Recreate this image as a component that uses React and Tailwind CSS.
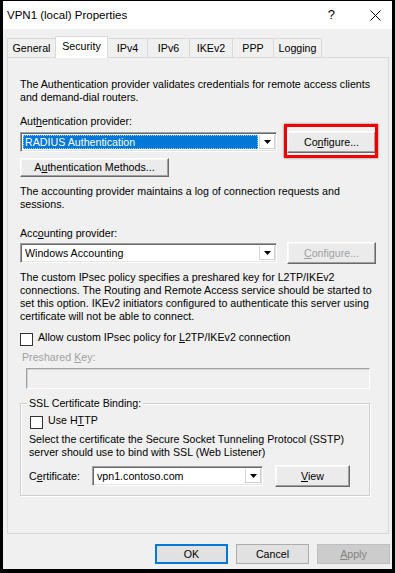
import React from "react";

/* ================= SMALL WIN32 PIECES ================= */
function Btn({ children, className = "", disabled }) {
    return (
        <div
            className={`flex items-center justify-center bg-[#ebebeb] border border-t-white border-l-white border-b-[#696969] border-r-[#696969] shadow-[inset_-1px_-1px_0_#a0a0a0,inset_1px_1px_0_#f8f8f8] ${disabled ? "text-[#a0a0a0]" : "text-black"} ${className}`}
        >
            <span>{children}</span>
        </div>
    );
}

function Arrow() {
    return (
        <svg width="7" height="4" viewBox="0 0 7 4">
            <path d="M0 0h7L3.5 4z" fill="#000" />
        </svg>
    );
}

function Combo({ children, className = "", selected }) {
    return (
        <div
            className={`flex bg-white border border-t-[#a0a0a0] border-l-[#a0a0a0] border-b-white border-r-white shadow-[inset_1px_1px_0_#696969,inset_-1px_-1px_0_#e3e3e3] pt-[2px] pb-[2px] pl-[2px] pr-[1px] ${className}`}
        >
            {selected ? (
                <div className="flex-1 flex items-center bg-[#0078d7] text-white pl-[1px] border border-dotted border-[#9cc8ef] whitespace-nowrap">
                    {children}
                </div>
            ) : (
                <div className="flex-1 flex items-center pl-[2px] whitespace-nowrap">{children}</div>
            )}
            <div className="w-[16px] ml-[1px] flex items-center justify-center bg-white border-l border-[#d6d6d6] shadow-[inset_-1px_-1px_0_#cfcfcf]">
                <Arrow />
            </div>
        </div>
    );
}

function Check() {
    return <div className="w-[13px] h-[13px] bg-white border border-[#333333] shrink-0" />;
}

const tabs = [
    { label: "General", w: "w-[49px]" },
    { label: "Security", w: "w-[53px]", active: true },
    { label: "IPv4", w: "w-[41px]" },
    { label: "IPv6", w: "w-[43px]" },
    { label: "IKEv2", w: "w-[44px]" },
    { label: "PPP", w: "w-[42px]" },
    { label: "Logging", w: "w-[49px]" },
];

export default function App() {
    return (
        <div className="w-[395px] h-[573px] bg-black pt-[1px] px-[3px] pb-[4px] font-['Liberation_Sans',Arial,sans-serif] text-[10.67px] leading-[13px] text-black">
            <div className="h-full flex flex-col bg-[#f0f0f0]">

                {/* ================= TITLE BAR ================= */}
                <div className="h-[28px] shrink-0 bg-white flex items-center pl-[4px] pr-[11px]">
                    <span className="flex-1 text-[11.5px] leading-[14px]">VPN1 (local) Properties</span>
                    <span className="text-[13px] leading-[14px] mr-[35px]">?</span>
                    <svg width="11" height="11" viewBox="0 0 11 11">
                        <path d="M0.5 0.5L10.5 10.5M10.5 0.5L0.5 10.5" stroke="#000" strokeWidth="1" />
                    </svg>
                </div>

                {/* ================= TABS + PAGE ================= */}
                <div className="pl-[4px] pr-[3px] pt-[7px] flex flex-col">
                    <div className="flex items-end h-[21px]">
                        {tabs.map((t, i) => (
                            <div
                                key={t.label}
                                className={`${t.w} ${i > 0 ? "-ml-px" : ""} flex justify-center border-t border-l border-r border-[#d9d9d9] pt-[3px] ${t.active ? "relative z-10 h-[22px] -mb-px bg-white" : "h-[19px] bg-[#f0f0f0]"}`}
                            >
                                {t.label}
                            </div>
                        ))}
                    </div>

                    <div className="h-[477px] border border-[#d9d9d9] pl-[12px] pt-[20px] flex flex-col items-start">
                        <p className="whitespace-nowrap">
                            The Authentication provider validates credentials for remote access clients
                            <br />
                            and demand-dial routers.
                        </p>

                        <p className="mt-[11px]">
                            Aut<u>h</u>entication provider:
                        </p>
                        <div className="mt-[3px] flex items-center h-[22px]">
                            <Combo selected className="w-[257px] h-[20px]">RADIUS Authentication</Combo>
                            <div className="relative ml-[10px]">
                                <Btn className="w-[89px] h-[22px]">
                                    Co<u>n</u>figure...
                                </Btn>
                                <div className="absolute -left-[3px] -right-[2px] -top-[7px] -bottom-[5px] border-[3px] border-[#f00000] shadow-[0_0_2px_rgba(0,0,0,0.55)]" />
                            </div>
                        </div>

                        <Btn className="mt-[5px] w-[149px] h-[19px]">
                            A<u>u</u>thentication Methods...
                        </Btn>

                        <p className="mt-[8px] whitespace-nowrap">
                            The accounting provider maintains a log of connection requests and
                            <br />
                            sessions.
                        </p>

                        <p className="mt-[16px]">
                            Acc<u>o</u>unting provider:
                        </p>
                        <div className="mt-[2px] flex items-center h-[22px]">
                            <Combo className="w-[257px] h-[20px]">Windows Accounting</Combo>
                            <Btn disabled className="ml-[10px] w-[89px] h-[22px]">
                                <u>C</u>onfigure...
                            </Btn>
                        </div>

                        <p className="mt-[7px] whitespace-nowrap">
                            The custom IPsec policy specifies a preshared key for L2TP/IKEv2
                            <br />
                            connections. The Routing and Remote Access service should be started to
                            <br />
                            set this option. IKEv2 initiators configured to authenticate this server using
                            <br />
                            certificate will not be able to connect.
                        </p>

                        <div className="mt-[8px] flex items-start gap-[5px]">
                            <div className="mt-[2px]">
                                <Check />
                            </div>
                            <span>
                                Allow custom IPsec policy for <u>L</u>2TP/IKEv2 connection
                            </span>
                        </div>

                        <p className="mt-[5px] ml-[2px] text-[#a0a0a0]">
                            Preshared <u>K</u>ey:
                        </p>
                        <div className="mt-[4px] ml-[6px] w-[344px] h-[21px] bg-[#f0f0f0] border border-t-[#a0a0a0] border-l-[#a0a0a0] border-b-white border-r-white shadow-[inset_1px_1px_0_#d4d4d4]" />

                        {/* ================= SSL GROUP ================= */}
                        <fieldset className="mt-[8px] w-[350px] border border-[#cfcfcf] shadow-[inset_1px_1px_0_#fff,1px_1px_0_#fff] pl-[8px] pb-[8px]">
                            <legend className="-ml-[2px] px-[2px]">SSL Certificate Binding:</legend>
                            <div className="mt-[4px] flex items-start gap-[5px] ml-[1px]">
                                <div className="mt-[2px]">
                                    <Check />
                                </div>
                                <span>
                                    Use H<u>T</u>TP
                                </span>
                            </div>
                            <p className="mt-[4px] whitespace-nowrap">
                                Select the certificate the Secure Socket Tunneling Protocol (SSTP)
                                <br />
                                server should use to bind with SSL (Web Listener)
                            </p>
                            <div className="mt-[6px] flex items-center h-[22px]">
                                <span className="w-[63px]">
                                    C<u>e</u>rtificate:
                                </span>
                                <Combo className="w-[171px] h-[20px]">vpn1.contoso.com</Combo>
                                <Btn className="ml-[12px] w-[75px] h-[22px]">
                                    <u>V</u>iew
                                </Btn>
                            </div>
                        </fieldset>
                    </div>
                </div>

                {/* ================= DIALOG BUTTONS ================= */}
                <div className="mt-[10px] flex justify-end gap-[8px] pr-[2px]">
                    <div className="w-[73px] h-[20px] flex items-center justify-center bg-[#e1e1e1] border-2 border-[#0078d7]">
                        OK
                    </div>
                    <div className="w-[73px] h-[20px] flex items-center justify-center bg-[#e1e1e1] border border-[#adadad]">
                        Cancel
                    </div>
                    <div className="w-[73px] h-[20px] flex items-center justify-center bg-[#cccccc] border border-[#bfbfbf] text-[#838383]">
                        <span>
                            <u>A</u>pply
                        </span>
                    </div>
                </div>
            </div>
        </div>
    );
}
